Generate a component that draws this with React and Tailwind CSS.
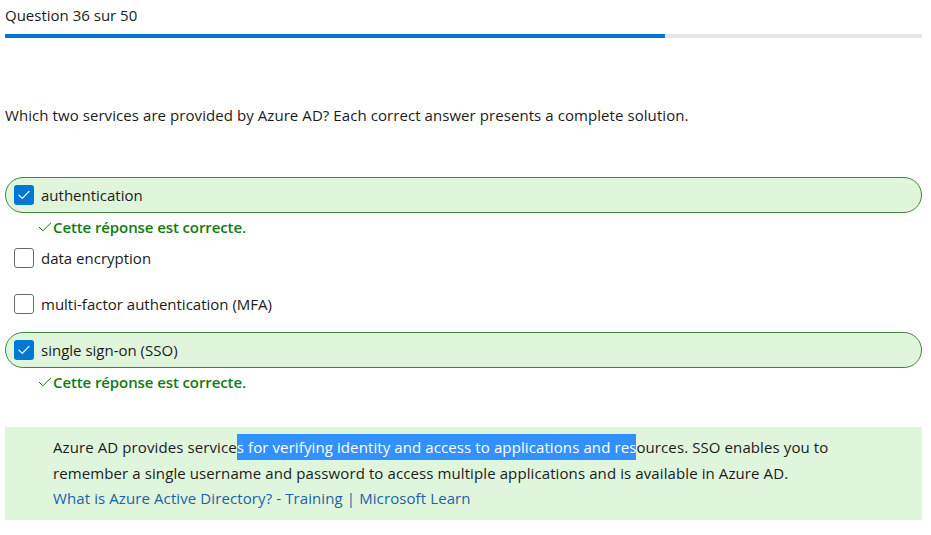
import React from 'react';

const options = [
  { label: 'authentication', checked: true, correct: true },
  { label: 'data encryption', checked: false },
  { label: 'multi-factor authentication (MFA)', checked: false },
  { label: 'single sign-on (SSO)', checked: true, correct: true },
];

function CheckBox({ checked }) {
  if (checked) {
    return (
      <span className="flex h-[20px] w-[20px] shrink-0 items-center justify-center rounded-[3px] bg-[#0078d4]">
        <svg width="12" height="10" viewBox="0 0 12 10" fill="none">
          <path d="M1 5.2 L4.3 8.4 L11 1.4" stroke="white" strokeWidth="1.2" strokeLinecap="round" strokeLinejoin="round" />
        </svg>
      </span>
    );
  }
  return <span className="h-[20px] w-[20px] shrink-0 rounded-[3px] border border-[#6b6b6b] bg-white" />;
}

function Feedback() {
  return (
    <div className="mt-[4px] flex h-[20px] items-center pl-[33px] text-[15px] font-semibold tracking-[-0.1px] text-[#107c10]">
      <svg width="14" height="10" viewBox="0 0 14 10" fill="none" className="mr-[1px]">
        <path d="M1 5 L4.8 8.8 L13 0.8" stroke="#107c10" strokeWidth="1" />
      </svg>
      Cette réponse est correcte.
    </div>
  );
}

export default function App() {
  return (
    <div className="min-h-screen bg-white px-[5px] text-[#1b1b1b]" style={{ fontFamily: '"Open Sans", "Noto Sans", sans-serif' }}>
      <div className="pt-[5px] text-[15px] leading-[20px]">Question 36 sur 50</div>
      <div className="mt-[9px] flex h-[4px] w-[917px] bg-[#e6e6e6]">
        <div className="h-full w-[660px] bg-[#0078d4]" />
      </div>

      <p className="mt-[67px] text-[15px] leading-[20px] tracking-[0.07px]">
        Which two services are provided by Azure AD? Each correct answer presents a complete solution.
      </p>

      <div className="mt-[52px] w-[917px]">
        {options.map((o, i) => (
          <div key={o.label}>
            <div
              className={
                o.correct
                  ? 'flex h-[36px] items-center gap-[7px] rounded-[18px] border border-[#3a8a3a] bg-[#dff6dd] pl-[8px]'
                  : 'flex h-[36px] items-center gap-[7px] rounded-[18px] border border-transparent pl-[8px] ' + (i === 1 ? 'mt-[3px]' : 'mt-[10px]')
              }
              style={o.correct && i > 0 ? { marginTop: 10 } : undefined}
            >
              <CheckBox checked={o.checked} />
              <span className="text-[15px] leading-[20px]">{o.label}</span>
            </div>
            {o.correct && <Feedback />}
          </div>
        ))}
      </div>

      <div className="mt-[35px] w-[917px] bg-[#dff6dd] pb-[8px] pl-[48px] pt-[8px] text-[15px] leading-[25.5px] tracking-[0.1px]">
        <div className="whitespace-nowrap">
          Azure AD provides service
          <span className="bg-[#3390ff] py-[3px] text-white">s for verifying identity and access to applications and res</span>
          ources. SSO enables you to
        </div>
        <div className="whitespace-nowrap">
          remember a single username and password to access multiple applications and is available in Azure AD.
        </div>
        <div className="text-[#1a62ab]">What is Azure Active Directory? - Training | Microsoft Learn</div>
      </div>
    </div>
  );
}
